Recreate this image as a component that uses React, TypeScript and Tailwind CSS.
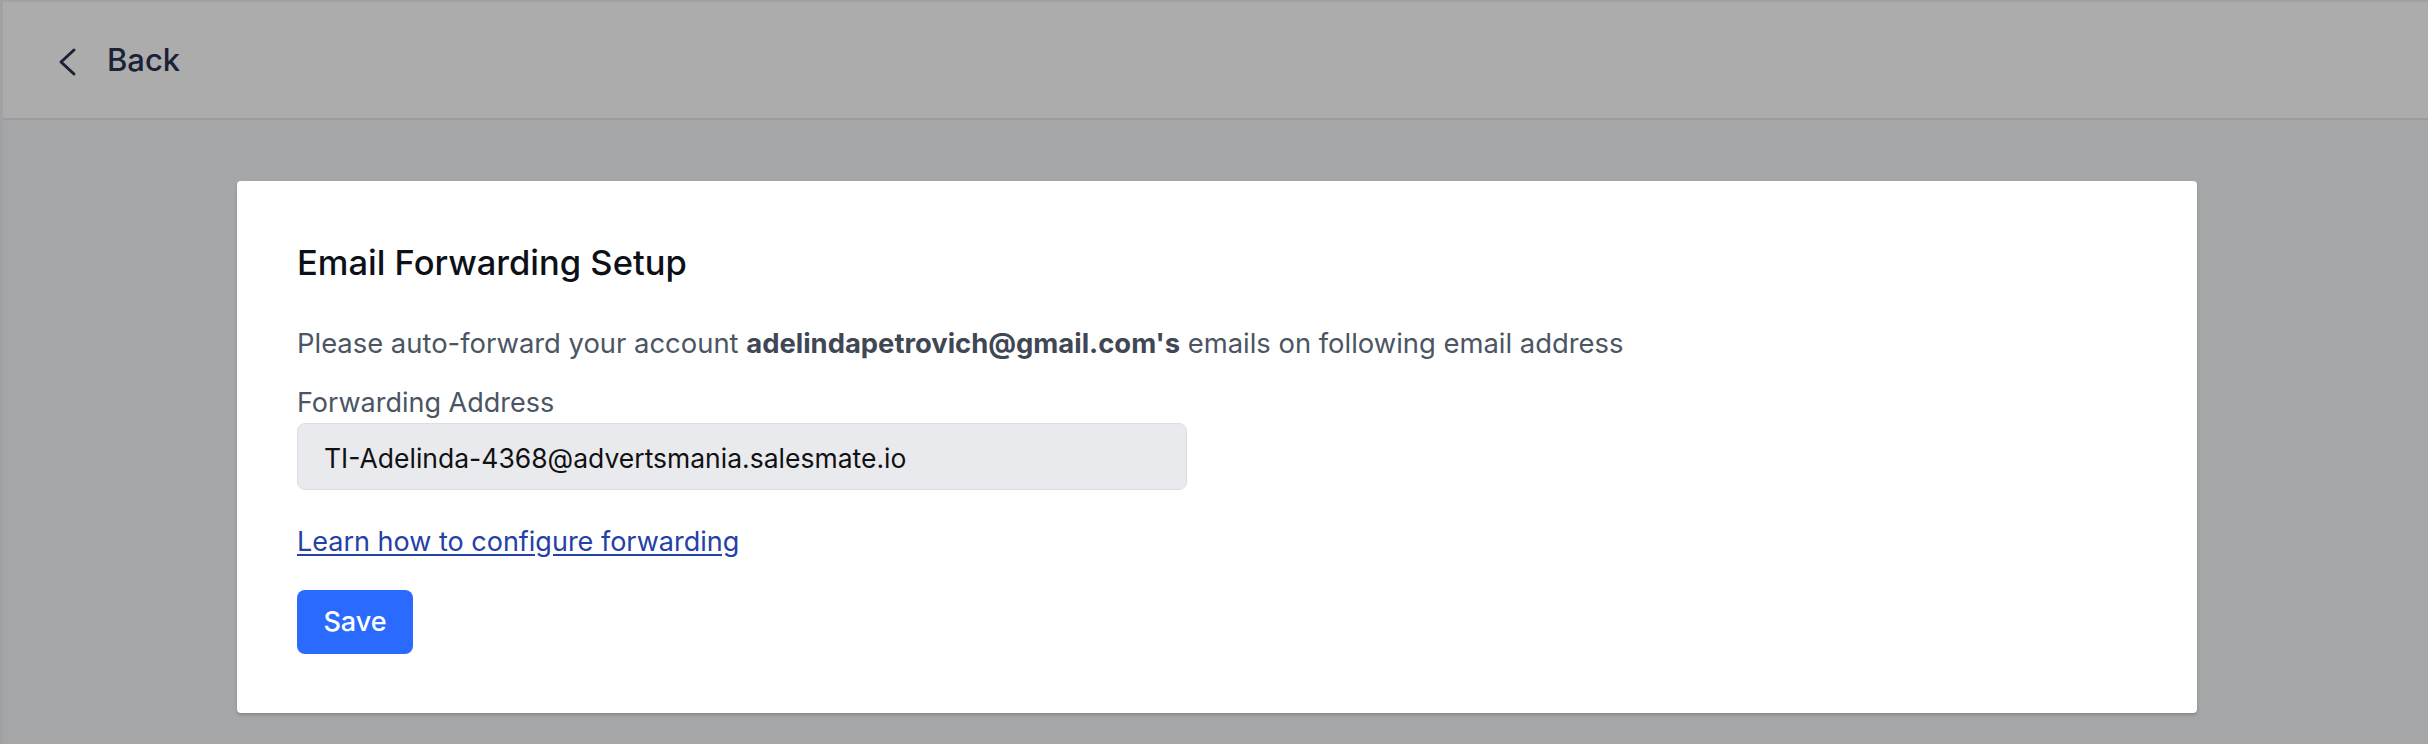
const ForwardingSetup = () => {
  return (
    <div className="min-h-screen bg-[#a5a6a8] border-t-2 border-l-[3px] border-[#a1a1a3] font-['Inter','Liberation_Sans',sans-serif]">
      {/* Top bar */}
      <header className="h-[118px] bg-[#acacac] border-b-2 border-[#9b9b9d] flex items-center pl-[53px]">
        <svg width="22" height="32" viewBox="0 0 22 32" className="mt-[4px]" fill="none">
          <path d="M18 4 L5 16 L18 28" stroke="#1b2237" strokeWidth="3" strokeLinecap="round" strokeLinejoin="round" />
        </svg>
        <span className="ml-[29px] text-[31px] leading-[40px] font-medium text-[#1b2237]">Back</span>
      </header>

      <main className="pt-[61px] pb-[30px]">
        <div className="ml-[234px] w-[1960px] bg-white rounded-[4px] shadow-[0_2px_3px_rgba(0,0,0,0.18)] pl-[60px] pt-[62px] pb-[59px]">
          <h1 className="text-[34.5px] leading-[40px] font-medium text-[#0d1117]">Email Forwarding Setup</h1>

          <p className="mt-[44px] text-[27.4px] leading-[32px] text-[#4b5563]">
            Please auto-forward your account{' '}
            <span className="font-bold text-[#3f4754]">adelindapetrovich@gmail.com's</span> emails on following email
            address
          </p>

          <label className="block mt-[28px] text-[27px] leading-[32px] text-[#4b5563]">Forwarding Address</label>
          <div className="mt-[4px] w-[890px] h-[67px] bg-[#e9eaee] border border-[#dcdde2] rounded-[8px] flex items-center pl-[26px] pt-[2px]">
            <span className="text-[26.5px] leading-[32px] text-[#111111]">TI-Adelinda-4368@advertsmania.salesmate.io</span>
          </div>

          <div className="mt-[36px]">
            <a href="#" className="text-[27px] leading-[32px] text-[#2341a6] underline underline-offset-[3px]">
              Learn how to configure forwarding
            </a>
          </div>

          <button className="mt-[32px] w-[116px] h-[64px] bg-[#2a6afe] rounded-[8px] text-white text-[27px] leading-[32px] font-medium flex items-center justify-center">
            Save
          </button>
        </div>
      </main>
    </div>
  );
};

export default ForwardingSetup;
